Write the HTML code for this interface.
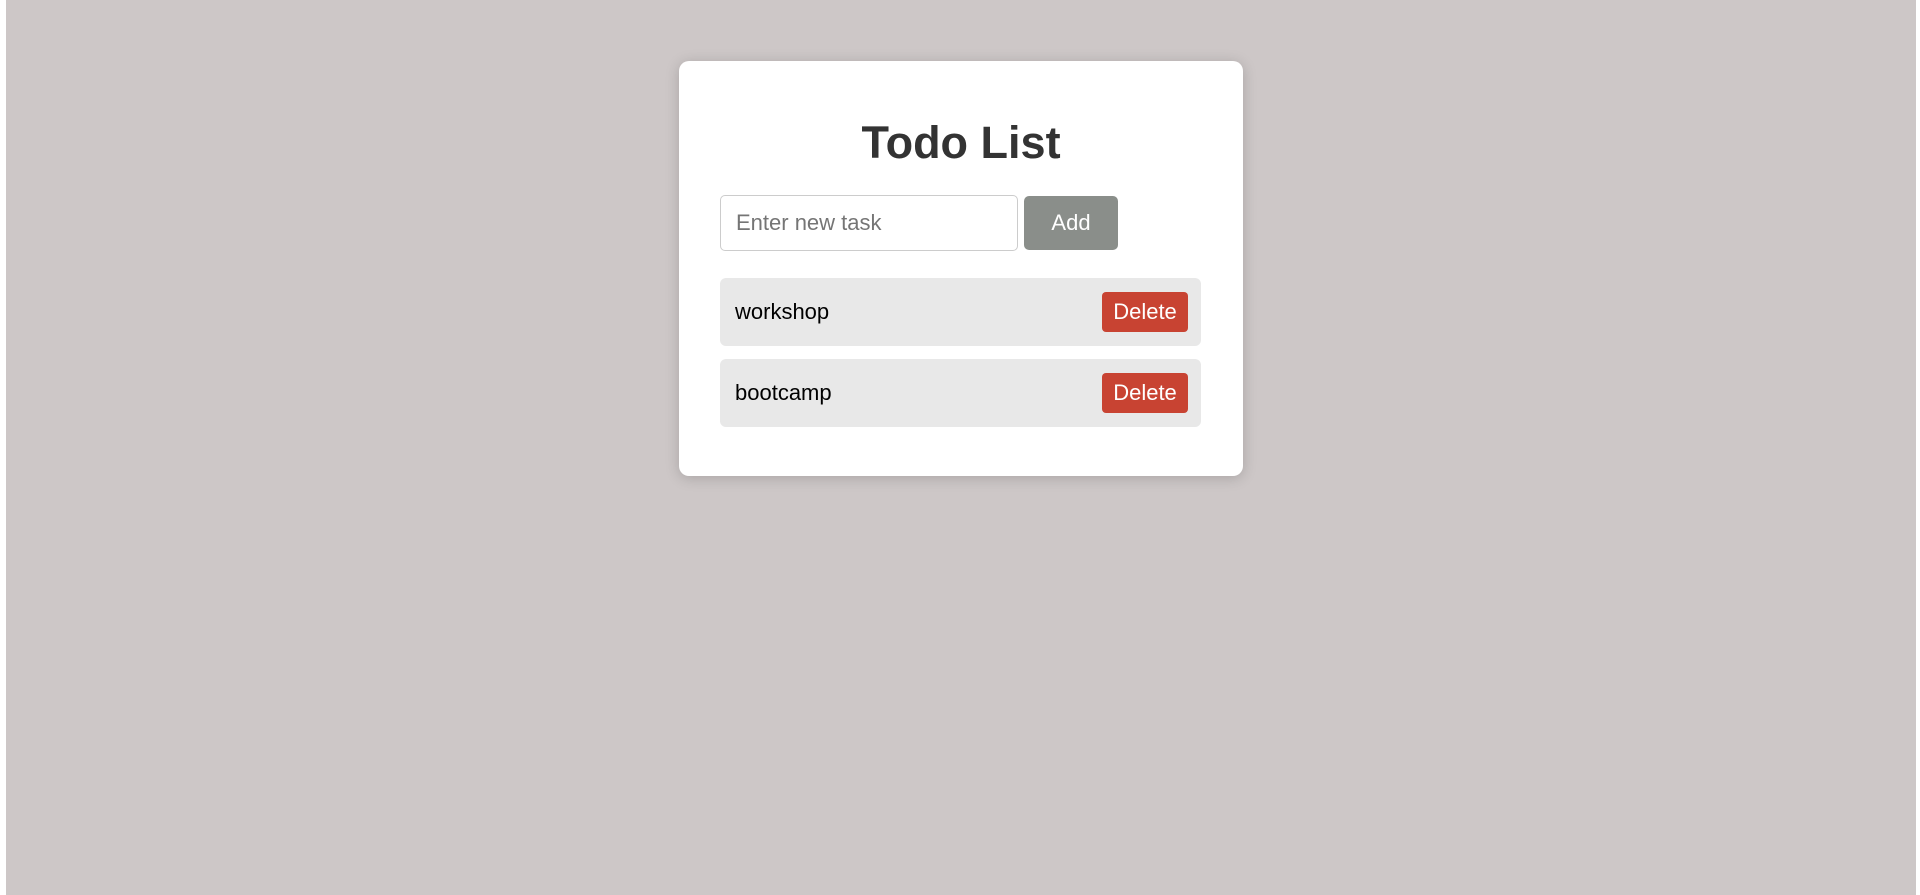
<!DOCTYPE html>
<html><head><meta charset="utf-8"><style>
html,body{margin:0;padding:0;width:1920px;height:895px;overflow:hidden;background:#fff;font-family:"Liberation Sans",Arial,sans-serif}
.bg{position:absolute;left:6px;top:0;width:1910px;height:895px;background:#cdc7c7}
.card{position:absolute;left:679px;top:61px;width:564px;height:415px;background:#fff;border-radius:10px;box-shadow:0 2px 14px rgba(0,0,0,0.18)}
h1{position:absolute;left:0;width:564px;top:50px;margin:0;text-align:center;font-size:45px;line-height:64px;color:#333;font-weight:bold}
.inp{position:absolute;left:41px;top:134px;box-sizing:border-box;width:298px;height:56px;border:1px solid #ccc;border-radius:5px;font-size:22px;color:#757575;line-height:54px;padding-left:15px}
.add{position:absolute;left:345px;top:135px;width:94px;height:54px;background:#8a8e8a;border-radius:5px;color:#fff;font-size:22px;line-height:54px;text-align:center}
.item{position:absolute;left:41px;width:481px;height:68px;background:#e8e8e8;border-radius:6px}
.item span{position:absolute;left:15px;top:0;line-height:68px;font-size:22px;color:#000}
.del{position:absolute;left:382px;top:14px;width:86px;height:40px;background:#c84332;border-radius:4px;color:#fff;font-size:22px;line-height:40px;text-align:center}
</style></head><body>
<div class="bg"></div>
<div class="card">
<h1>Todo List</h1>
<div class="inp">Enter new task</div>
<div class="add">Add</div>
<div class="item" style="top:217px"><span>workshop</span><div class="del">Delete</div></div>
<div class="item" style="top:298px"><span>bootcamp</span><div class="del">Delete</div></div>
</div>
</body></html>
